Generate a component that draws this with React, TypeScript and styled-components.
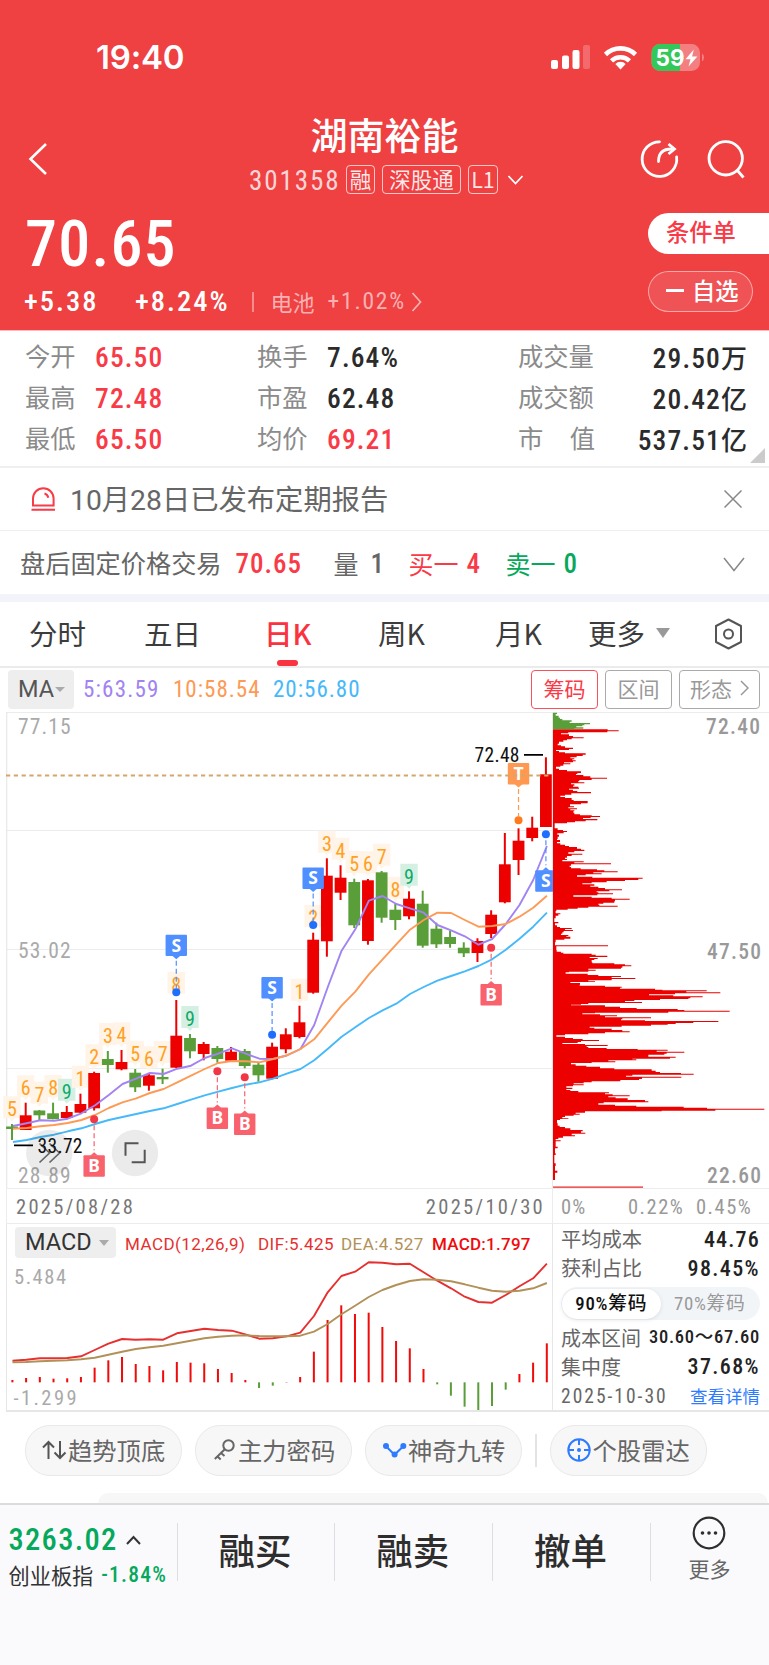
import React from 'react';
import styled, { createGlobalStyle } from 'styled-components';

const CJK = `"Noto Sans CJK SC", sans-serif`;
const DIGITS = `Roboto, "Noto Sans CJK SC", sans-serif`;

const Global = createGlobalStyle`
  * { box-sizing: border-box; }
  body { margin: 0; background: #fff; font-family: ${CJK}; }
  #root { width: 769px; }
`;

const Page = styled.div`
  width: 769px;
  height: 1665px;
  display: flex;
  flex-direction: column;
  overflow: hidden;
  background: #fff;
`;

const Txt = styled.span<{ $s: number; $c?: string; $w?: number; $ml?: number; $ls?: number; $width?: number; $up?: number }>`
  font-family: ${CJK};
  font-size: ${p => p.$s}px;
  font-weight: ${p => p.$w ?? 400};
  color: ${p => p.$c ?? 'inherit'};
  margin-left: ${p => p.$ml ?? 0}px;
  margin-bottom: ${p => (p.$up ?? 0) * 2}px;
  letter-spacing: ${p => p.$ls ?? 0}px;
  ${p => (p.$width ? `width: ${p.$width}px;` : '')}
  line-height: 1;
  white-space: nowrap;
  flex: none;
`;

const Num = styled(Txt)`
  font-family: ${DIGITS};
  font-stretch: 87.5%;
`;

/* ---------- header ---------- */

const Header = styled.header`
  height: 330px;
  flex: none;
  background: #ef4042;
  color: #fff;
  display: flex;
  flex-direction: column;
`;

const StatusBar = styled.div`
  height: 115px;
  display: flex;
  align-items: center;
  padding: 0 64px 0 96px;
`;

const Clock = styled.span`
  font: 600 33px/1 Inter, sans-serif;
  letter-spacing: -0.2px;
  flex: 1;
`;

const StatusIcons = styled.svg`
  width: 160px;
  height: 32px;
  margin-right: -1px;
`;

const Nav = styled.div`
  height: 88px;
  display: grid;
  grid-template-columns: 240px 289px 240px;
`;

const NavSide = styled.div`
  display: flex;
  align-items: center;
`;

const NavCenter = styled.div`
  display: flex;
  flex-direction: column;
  align-items: center;
  gap: 10px;
`;

const Title = styled.h1`
  margin: 0;
  height: 40px;
  font: 500 37px/38px ${CJK};
`;

const CodeRow = styled.div`
  height: 29px;
  display: flex;
  align-items: center;
  align-self: stretch;
  padding-left: 9px;
`;

const Badge = styled.span<{ $w: number; $ml: number }>`
  width: ${p => p.$w}px;
  height: 29px;
  margin-left: ${p => p.$ml}px;
  border: 1.5px solid rgba(255, 255, 255, 0.7);
  border-radius: 4px;
  color: rgba(255, 255, 255, 0.88);
  font: 400 21.5px/25px ${CJK};
  text-align: center;
  flex: none;
  white-space: nowrap;
`;

const PriceArea = styled.div`
  flex: 1;
  display: flex;
  justify-content: space-between;
`;

const PriceCol = styled.div`
  display: flex;
  flex-direction: column;
`;

const BigPrice = styled.div`
  height: 82px;
  display: flex;
  align-items: center;
  padding: 1px 0 0 25px;
`;

const ChangeRow = styled.div`
  height: 34px;
  display: flex;
  align-items: center;
  padding-left: 24px;
`;

const Bar = styled.i<{ $h: number; $c: string; $ml?: number }>`
  width: 1.5px;
  height: ${p => p.$h}px;
  background: ${p => p.$c};
  margin-left: ${p => p.$ml ?? 0}px;
  flex: none;
`;

const Actions = styled.div`
  width: 121px;
  padding-top: 10px;
  display: flex;
  flex-direction: column;
  gap: 17px;
`;

const OrderPill = styled.button`
  height: 41px;
  padding: 0 0 3px 18px;
  border: 0;
  border-radius: 21px 0 0 21px;
  background: #fff;
  color: #f93a47;
  font: 500 23.3px/1 ${CJK};
  text-align: left;
`;

const WatchPill = styled.button`
  height: 41px;
  width: 105px;
  padding: 0 0 2px 17px;
  border: 1.5px solid rgba(255, 255, 255, 0.5);
  border-radius: 21px;
  background: rgba(255, 255, 255, 0.1);
  color: #fff;
  font: 500 23.3px/1 ${CJK};
  display: flex;
  align-items: center;
  gap: 8px;
`;

const Minus = styled.i`
  width: 18px;
  height: 2.5px;
  background: #fff;
`;

/* ---------- quote stats ---------- */

const Stats = styled.section`
  height: 138px;
  flex: none;
  border-top: 1px solid #fbb9ba;
  border-bottom: 2px solid #efeff2;
  padding: 6px 22px 0 25px;
  display: grid;
  grid-template-columns: 232px 261px 229px;
  grid-auto-rows: 41px;
  position: relative;
`;

const Stat = styled.div`
  display: flex;
  align-items: center;
  color: #8b8b8b;
`;

const StatLabel = styled.span<{ $wide?: boolean; $spread?: boolean }>`
  width: ${p => (p.$wide ? 77 : 70)}px;
  font: 400 25.3px/1 ${CJK};
  margin-top: -3px;
  ${p => (p.$spread ? 'display: flex; justify-content: space-between;' : '')}
`;

const StatValue = styled(Num)<{ $right?: boolean }>`
  margin-top: 1px;
  ${p => (p.$right ? 'margin-left: auto;' : '')}
`;

const Unit = styled.span`
  font: 500 26px/1 ${CJK};
  letter-spacing: 0;
`;

const Corner = styled.i`
  position: absolute;
  right: 4px;
  bottom: 3px;
  border-left: 15px solid transparent;
  border-bottom: 15px solid #cbcbcb;
`;

const Notice = styled.section`
  height: 63px;
  flex: none;
  border-bottom: 1.5px solid #efeff2;
  display: flex;
  align-items: center;
  padding: 0 27px 0 31px;
  color: #666;
`;

const NoticeText = styled.span`
  margin: 4px 0 0 14px;
  font: 400 28.3px/1 ${DIGITS};
  color: #666;
`;

const AfterHours = styled.section`
  height: 63px;
  flex: none;
  display: flex;
  align-items: center;
  padding: 4px 24px 0 20px;
  color: #666;
`;

const Push = styled.i`
  flex: 1;
`;

const Gap = styled.div`
  height: 8px;
  flex: none;
  background: #f2f4f9;
`;

/* ---------- tabs ---------- */

const Tabs = styled.nav`
  height: 66px;
  flex: none;
  border-bottom: 2px solid #ebebeb;
  display: flex;
  align-items: center;
  padding-left: 29px;
  color: #3c3c3c;
`;

const Tab = styled.span<{ $w: number; $on?: boolean }>`
  width: ${p => p.$w}px;
  height: 64px;
  flex: none;
  display: flex;
  align-items: center;
  padding-bottom: 2px;
  font: 400 28.5px/1 ${CJK};
  color: ${p => (p.$on ? '#fa3340' : 'inherit')};
  font-weight: ${p => (p.$on ? 500 : 400)};
  position: relative;
  &::after {
    content: ${p => (p.$on ? '""' : 'none')};
    position: absolute;
    left: 13px;
    bottom: 0;
    width: 21px;
    height: 6px;
    border-radius: 3px;
    background: #fa3340;
  }
`;

const Caret = styled.i<{ $w: number; $h: number; $ml: number; $c?: string }>`
  border: solid transparent;
  border-width: ${p => p.$h}px ${p => p.$w / 2}px 0;
  border-top-color: ${p => p.$c ?? '#aaa'};
  margin-left: ${p => p.$ml}px;
  flex: none;
`;

const MaRow = styled.section`
  height: 44px;
  flex: none;
  display: flex;
  align-items: center;
  padding: 0 9px 1px 8px;
`;

const Selector = styled.div<{ $w: number; $h: number; $pl: number }>`
  width: ${p => p.$w}px;
  height: ${p => p.$h}px;
  padding-left: ${p => p.$pl}px;
  border-radius: 4px;
  background: #eee;
  color: #444;
  display: flex;
  align-items: center;
  flex: none;
`;

const SelectorText = styled.span<{ $c: string }>`
  font: 400 23.5px/1 Roboto, sans-serif;
  color: ${p => p.$c};
`;

const Toggle = styled.button<{ $w: number; $c: string; $b: string; $ml: number }>`
  width: ${p => p.$w}px;
  height: 39px;
  margin-left: ${p => p.$ml}px;
  padding: 0 0 3px;
  border: 1.5px solid ${p => p.$b};
  border-radius: 4px;
  background: #fff;
  color: ${p => p.$c};
  font: 400 21px/1 ${CJK};
  display: flex;
  align-items: center;
  justify-content: center;
  gap: 8px;
`;

/* ---------- charts ---------- */

const ChartGrid = styled.section`
  display: grid;
  grid-template-columns: 553px 216px;
  grid-template-rows: 476px 36px 188px;
  flex: none;
`;

const Svg = styled.svg`
  display: block;
  width: 100%;
  height: 100%;
`;

const AxisLabel = styled.text`
  font-family: Roboto, sans-serif;
  font-stretch: 87.5%;
`;

const Dates = styled.div`
  margin-left: 6px;
  border: solid #ececec;
  border-width: 1px 1px 1px 1.5px;
  padding: 2px 7px 0 9px;
  display: flex;
  justify-content: space-between;
  align-items: center;
  color: #777;
`;

const Percents = styled.div`
  border: solid #ececec;
  border-width: 1px 0;
  display: flex;
  align-items: center;
  padding: 2px 0 0 8px;
  color: #999;
`;

const MacdPane = styled.div`
  margin-left: 6px;
  border: solid #e6e6e6;
  border-width: 0 1px 2px 1.5px;
  display: flex;
  flex-direction: column;
`;

const MacdHead = styled.div`
  height: 36px;
  flex: none;
  display: flex;
  align-items: center;
  padding: 1px 0 0 8px;
`;

const MacdLabel = styled.span<{ $c: string; $w?: number; $bold?: boolean }>`
  width: ${p => (p.$w ? `${p.$w}px` : 'auto')};
  padding-top: 4px;
  font: ${p => (p.$bold ? 500 : 400)} 17px/1 Roboto, sans-serif;
  letter-spacing: ${p => (p.$bold ? 0.25 : 0.45)}px;
  color: ${p => p.$c};
  white-space: nowrap;
  flex: none;
`;

const MacdBody = styled.div`
  flex: 1;
  min-height: 0;
`;

const CostPane = styled.div`
  border-bottom: 2px solid #e6e6e6;
  padding: 0 9px 0 8px;
  display: flex;
  flex-direction: column;
`;

const CostRow = styled.div<{ $h: number }>`
  height: ${p => p.$h}px;
  flex: none;
  display: flex;
  align-items: center;
  justify-content: space-between;
  color: #666;
`;

const Segment = styled.div`
  height: 33px;
  margin: 4px 0 3px 0;
  border-radius: 17px;
  background: #f2f5f8;
  display: flex;
  align-items: center;
  padding: 1px;
  flex: none;
`;

const SegItem = styled.span<{ $on?: boolean }>`
  flex: 1;
  height: 30px;
  border-radius: 15px;
  background: ${p => (p.$on ? '#fff' : 'transparent')};
  box-shadow: ${p => (p.$on ? '0 1px 4px rgba(0,0,0,.1)' : 'none')};
  color: ${p => (p.$on ? '#111' : '#999')};
  font: ${p => (p.$on ? 500 : 400)} 18.8px/31px ${DIGITS};
  font-stretch: 87.5%;
  letter-spacing: 0.7px;
  text-align: center;
`;

/* ---------- bottom ---------- */

const Chips = styled.section`
  height: 81px;
  flex: none;
  display: flex;
  align-items: flex-start;
  padding: 13px 0 0 25px;
  gap: 13px;
`;

const Chip = styled.button`
  width: 157px;
  height: 51px;
  border: 1.5px solid #e9e9e9;
  border-radius: 25px;
  background: #f7f7f7;
  color: #666;
  font: 400 24.3px/1 ${CJK};
  padding: 0 0 1px 16px;
  display: flex;
  align-items: center;
  gap: 1px;
  flex: none;
`;

const ChipRule = styled.i`
  width: 1.5px;
  height: 33px;
  margin-top: 9px;
  background: #e4e4e4;
  margin-right: 0;
`;

const Peek = styled.div`
  height: 10px;
  flex: none;
  margin: 0 1px 0 98px;
  border-radius: 10px 10px 0 0;
  background: #f7f7f7;
`;

const BottomBar = styled.footer`
  flex: 1;
  border-top: 2px solid #dcdcdf;
  background: #fafafc;
  display: flex;
  align-items: flex-start;
`;

const IndexCol = styled.div`
  width: 176.5px;
  padding: 16px 0 0 8.5px;
  display: flex;
  flex-direction: column;
`;

const IndexLine = styled.div<{ $h: number }>`
  height: ${p => p.$h}px;
  display: flex;
  align-items: center;
`;

const Trade = styled.button`
  width: 157.8px;
  height: 58px;
  margin-top: 18px;
  padding: 0 2px 4px 0;
  border: 0;
  border-left: 1.5px solid #dedee2;
  background: none;
  color: #2e2e2e;
  font: 500 36.5px/1 ${CJK};
`;

const MoreCol = styled.div`
  flex: 1;
  height: 58px;
  margin-top: 18px;
  border-left: 1.5px solid #dedee2;
  padding-right: 1px;
  display: flex;
  flex-direction: column;
  align-items: center;
  color: #666;
`;

const MoreIcon = styled.svg`
  width: 34px;
  height: 34px;
  margin-top: -7px;
  margin-bottom: 8px;
  flex: none;
`;

/* ---------- data ---------- */

const RED = '#ec0000';
const GREEN = '#5a9e3a';
const cx = (i: number) => 12 + 13.69 * i;

// [up, high, bodyTop, bodyBottom, low]
const candles: [number, number, number, number, number][] = [
  [0, 1124, 1126.5, 1129, 1140], [1, 1102.7, 1115.3, 1130, 1130], [0, 1110, 1110.5, 1115.3, 1120.5],
  [0, 1102.7, 1113.3, 1119, 1119.3], [1, 1106, 1112, 1118, 1118], [1, 1093.7, 1104, 1112.7, 1113],
  [1, 1071.7, 1073, 1108.3, 1110.5], [0, 1051, 1059, 1065, 1072.7], [1, 1050, 1062, 1069.3, 1070.3],
  [0, 1069, 1072.7, 1087.3, 1092], [1, 1073.3, 1075.3, 1085.7, 1090.7], [0, 1068.7, 1077, 1079.3, 1084],
  [1, 1000, 1035.7, 1067.7, 1068], [0, 1034, 1038, 1051.3, 1058.3], [1, 1042, 1044, 1054, 1060.3],
  [0, 1046, 1048, 1059, 1062.7], [1, 1047, 1051.7, 1060.7, 1060.7], [0, 1049, 1051, 1066, 1068.3],
  [0, 1062.7, 1064.7, 1075.3, 1081.7], [1, 1042.7, 1046.7, 1078.7, 1079.3], [1, 1028.3, 1034.3, 1049.3, 1053.3],
  [1, 1005.7, 1022.3, 1037, 1038.3], [1, 932.7, 939.7, 992.7, 993.7], [1, 858.3, 875.7, 941.3, 956.7],
  [1, 865.3, 877.7, 892.7, 900], [0, 878.7, 882, 925.3, 928], [1, 879, 880.3, 941, 944.7],
  [0, 871, 872.3, 917.7, 922.7], [0, 904, 909.7, 920, 930], [1, 891.3, 898.7, 916.3, 919.3],
  [0, 890.7, 903.7, 945.7, 947.7], [0, 922.7, 928.7, 944.3, 948], [0, 930.7, 937, 944, 947.7],
  [0, 942.3, 947.7, 953.3, 957], [1, 938.3, 941, 953, 962], [1, 910.3, 914.7, 934, 938],
  [1, 833, 864.3, 902.3, 903.3], [1, 828.3, 840.7, 860, 875], [1, 816.7, 827.7, 838, 841.3],
  [1, 757.3, 774.3, 827, 827],
];

const ma5 = [1126, 1123.3, 1120.3, 1120.7, 1118.7, 1113.3, 1105.3, 1095, 1084, 1078.7, 1073, 1074, 1068.7, 1065.7, 1058, 1053.7, 1048.3, 1053.7, 1058.7, 1059, 1055.5, 1049, 1025, 986.7, 950.7, 929.3, 900.7, 896, 904, 908.3, 912.7, 925, 930.3, 936.3, 944.7, 939, 924, 905, 880, 846];
const ma10 = [1128.7, 1128, 1126.3, 1125, 1123, 1120, 1115, 1108, 1102.3, 1098.3, 1093, 1089, 1082.3, 1075.7, 1069, 1063, 1061, 1061.3, 1062.3, 1059, 1055.3, 1049, 1039.3, 1022.3, 1005.7, 991.7, 974.3, 959.3, 944.3, 929.7, 920, 912.7, 913, 920, 926.7, 926, 924, 916.7, 907.7, 895.7];
const ma20 = [1142, 1140, 1137, 1134.7, 1131.3, 1128.3, 1124, 1120, 1117, 1114, 1111, 1108.3, 1104, 1099.7, 1095.3, 1091.7, 1088, 1084.7, 1082.3, 1078.7, 1073.7, 1069, 1060.3, 1048.7, 1036.7, 1027.3, 1018, 1010.3, 1003.7, 994, 987, 980.7, 976, 971.3, 966, 959.3, 949.7, 938.7, 926.7, 912.7];

// [candle index, digit, text centre]
const counts: [number, string, number][] = [
  [0, '5', 1109.3], [1, '6', 1088.3], [2, '7', 1094.7], [3, '8', 1088], [4, '9', 1091.7], [5, '1', 1078.7],
  [6, '2', 1057.3], [7, '3', 1036], [8, '4', 1035.3], [9, '5', 1053.7], [10, '6', 1059.3], [11, '7', 1054],
  [12, '8', 984.7], [13, '9', 1019], [21, '1', 991.7], [22, '2', 918], [23, '3', 843.7], [24, '4', 850.7],
  [25, '5', 864], [26, '6', 864.3], [27, '7', 856.7], [28, '8', 889.7], [29, '9', 876.7],
];

type Mark = { i: number; t: 'S' | 'B' | 'T'; box: number; dot: number };
const marks: Mark[] = [
  { i: 12, t: 'S', box: 934.7, dot: 992.3 },
  { i: 19, t: 'S', box: 977, dot: 1034.7 },
  { i: 22, t: 'S', box: 867.5, dot: 925 },
  { i: 39, t: 'S', box: 870.3, dot: 834.3 },
  { i: 37, t: 'T', box: 763, dot: 820.3 },
  { i: 6, t: 'B', box: 1155.3, dot: 1119.3 },
  { i: 15, t: 'B', box: 1107.5, dot: 1071.3 },
  { i: 17, t: 'B', box: 1113.5, dot: 1077.3 },
  { i: 35, t: 'B', box: 984, dot: 947.7 },
];
const markColors = {
  S: ['#4f8fff', '#1f6fff'],
  B: ['#f9616d', '#f33644'],
  T: ['#ff9850', '#ff7a1c'],
};

// Cost distribution as alternating row offset and extent, three units per pixel.
const lossRows = [38, 36, 42, 32, 47, 41, 53, 45, 57, 52, 61, 80, 65, 74, 69, 135, 73, 118, 76, 112, 79, 94, 82, 115, 86, 88];
const profitRows = [
  88, 188, 91, 221, 94, 187, 97, 70, 100, 48, 103, 72, 108, 84, 112, 116, 115, 80, 118, 66, 121, 55, 125, 42, 131, 38, 136, 48, 139, 60, 143, 84, 147, 72, 150, 33,
  153, 42, 157, 60, 160, 122, 164, 113, 168, 95, 172, 76, 175, 88, 178, 82, 181, 92, 184, 84, 187, 57, 190, 76, 193, 55, 197, 46, 200, 33, 206, 42, 210, 66,
  214, 108, 219, 97, 222, 93, 225, 115, 229, 136, 233, 186, 236, 140, 240, 103, 243, 100, 247, 118, 250, 78, 253, 88, 257, 84, 260, 100, 263, 102, 266, 72,
  269, 84, 273, 97, 276, 138, 280, 79, 284, 60, 287, 46, 291, 60, 294, 80, 300, 86, 303, 128, 310, 108, 313, 75, 319, 87, 322, 70, 325, 96, 328, 76, 331, 88,
  334, 85, 338, 88, 343, 105, 346, 140, 348, 165, 351, 137, 354, 114, 357, 157, 361, 122, 364, 90, 367, 66, 370, 29, 385, 38, 390, 54, 393, 66, 396, 56, 400, 37,
  404, 42, 410, 38, 417, 36, 420, 45, 426, 36, 430, 46, 434, 60, 438, 72, 441, 96, 446, 108, 449, 118, 453, 88, 457, 70, 461, 112, 464, 80, 468, 66, 473, 60,
  477, 66, 480, 52, 484, 116, 487, 88, 490, 198, 493, 78, 497, 74, 501, 78, 505, 107, 508, 156, 511, 178, 514, 218, 517, 145, 520, 170, 523, 122, 526, 96,
  530, 142, 533, 293, 536, 280, 540, 240, 543, 185, 547, 140, 550, 112, 553, 148, 557, 136, 560, 160, 564, 180, 568, 231, 571, 193, 574, 155, 577, 160, 580, 204,
  583, 157, 586, 85, 590, 140, 593, 200, 596, 254, 599, 210, 604, 208, 608, 175, 611, 160, 614, 163, 617, 218, 620, 130, 623, 98, 626, 68, 629, 34, 633, 32,
  640, 46, 643, 40, 647, 32, 655, 28, 666, 40, 670, 30, 676, 36, 681, 45, 684, 80, 687, 60, 690, 84, 693, 56, 697, 52, 701, 48, 705, 70, 708, 64, 710, 76,
  716, 58, 719, 32, 727, 30, 736, 189, 739, 34, 745, 34, 750, 35, 755, 48, 758, 55, 761, 140, 764, 152, 767, 187, 771, 134, 774, 158, 777, 148, 780, 140,
  787, 142, 790, 208, 793, 240, 796, 259, 799, 232, 803, 228, 806, 130, 809, 152, 812, 130, 815, 72, 817, 62, 821, 128, 825, 160, 828, 228, 831, 200, 834, 271,
  837, 200, 841, 130, 844, 150, 846, 76, 849, 105, 854, 104, 857, 180, 860, 230, 863, 225, 866, 330, 869, 352, 871, 485, 874, 424, 877, 526, 880, 390, 883, 312,
  886, 385, 889, 473, 892, 436, 895, 430, 897, 345, 900, 268, 903, 240, 906, 291, 909, 130, 912, 108, 914, 78, 916, 180, 920, 225, 924, 275, 927, 398, 930, 418,
  932, 554, 935, 370, 938, 150, 940, 112, 943, 165, 946, 216, 949, 180, 952, 318, 955, 232, 958, 228, 961, 300, 963, 520, 966, 445, 969, 392, 972, 368, 974, 318,
  977, 230, 980, 134, 983, 148, 986, 200, 990, 232, 994, 254, 997, 180, 1000, 130, 1003, 60, 1006, 34, 1010, 60, 1014, 84, 1017, 113, 1020, 162, 1023, 108,
  1026, 98, 1029, 52, 1032, 120, 1035, 188, 1038, 125, 1041, 130, 1044, 185, 1047, 278, 1049, 368, 1052, 335, 1055, 418, 1058, 365, 1061, 358, 1064, 310,
  1070, 392, 1073, 375, 1076, 262, 1078, 274, 1081, 190, 1084, 211, 1087, 140, 1089, 78, 1093, 92, 1097, 124, 1100, 165, 1105, 208, 1108, 320, 1112, 332,
  1116, 345, 1119, 408, 1121, 446, 1124, 262, 1127, 243, 1130, 409, 1133, 291, 1137, 282, 1140, 226, 1144, 140, 1147, 116, 1150, 86, 1153, 116, 1156, 84,
  1159, 64, 1163, 82, 1167, 64, 1170, 76, 1173, 100, 1177, 192, 1180, 180, 1183, 203, 1186, 254, 1189, 190, 1192, 212, 1195, 248, 1200, 300, 1204, 310,
  1207, 176, 1210, 160, 1214, 210, 1217, 274, 1220, 416, 1223, 486, 1226, 658, 1229, 511, 1232, 350, 1234, 120, 1238, 92, 1241, 104, 1244, 86, 1247, 60,
  1251, 52, 1255, 70, 1257, 45, 1260, 36, 1270, 38, 1277, 44, 1281, 60, 1285, 76, 1290, 113, 1294, 108, 1298, 121, 1301, 80, 1306, 90, 1309, 54, 1313, 40,
  1317, 32, 1321, 47, 1324, 32, 1340, 38, 1345, 30, 1360, 32, 1365, 28, 1390, 32, 1398, 30, 1412, 37, 1418, 30, 1440, 24,
];
const steps = (rows: number[], end: number) => {
  let d = `M24 ${rows[0]}`;
  for (let k = 0; k < rows.length; k += 2) d += `V${rows[k]}H${rows[k + 1]}`;
  return `${d}V${end}H24Z`;
};

const dif = [422, 419, 415, 415, 414, 409, 390, 371, 357, 359, 358, 359, 340, 333, 326, 330, 332, 343, 356, 355, 349, 338, 288, 217, 168, 155, 127, 128, 133, 131, 157, 182, 205, 230, 246, 248, 225, 199, 175, 131];
const dea = [427, 426, 424, 422, 421, 418, 413, 404, 395, 387, 382, 377, 370, 362, 355, 350, 347, 346, 348, 349, 349, 347, 335, 312, 283, 257, 231, 210, 195, 183, 178, 179, 184, 193, 203, 212, 215, 212, 205, 189];
const hist = [480, 474, 471, 476, 475, 471, 443, 421, 411, 432, 438, 451, 426, 428, 430, 447, 459, 480, 504, 497, 486, 471, 395, 300, 256, 282, 278, 321, 363, 385, 447, 493, 527, 560, 572, 558, 509, 462, 428, 370];
const ZERO = 487;

const line = (ys: number[], f: (y: number) => number = y => y, dx = 1) =>
  ys.map((y, i) => `${(cx(i) + dx).toFixed(1)},${f(y).toFixed(1)}`).join(' ');

const AxisText = ({ x, y, w, s = 21.5, c = '#aaa', weight = 400, children }: { x: number; y: number; w: number; s?: number; c?: string; weight?: number; children: string }) => (
  <AxisLabel x={x} y={y} textLength={w} lengthAdjust="spacing" fontSize={s} fontWeight={weight} fill={c}>
    {children}
  </AxisLabel>
);

const Marker = ({ i, t, box, dot }: Mark) => {
  const x = cx(i);
  const above = box < dot;
  const [fill, dark] = markColors[t];
  const y1 = above ? box + 26 : dot + 6;
  const y2 = above ? dot - 4 : box - 5;
  return (
    <g>
      <line x1={x} x2={x} y1={y1} y2={y2} stroke={fill} strokeWidth="1.2" strokeDasharray="5 3" />
      <circle cx={x} cy={dot} r="4" fill={dark} />
      <rect x={x - 10.7} y={box} width="21.4" height="21.4" rx="1" fill={fill} />
      <path d={above ? `M${x - 4} ${box + 21}l4 3.6l4-3.6z` : `M${x - 4} ${box + 0.4}l4-3.4l4 3.4z`} fill={fill} />
      <text x={x} y={box + 16.8} textAnchor="middle" fontFamily='"Noto Sans", sans-serif' fontSize="17.5" fontWeight="700" fill="#fff">{t}</text>
    </g>
  );
};

const CandleChart = () => (
  <Svg viewBox="0 712 553 476">
    {[712.5, 830.5, 949.5, 1068.5].map(y => (
      <line key={y} x1="6" x2="553" y1={y} y2={y} stroke="#ececec" />
    ))}
    <path d="M6.7 712V1188M552.6 712V1188" stroke="#e8e8e8" strokeWidth="1.2" />
    <AxisText x={18} y={733.7} w={52.5}>77.15</AxisText>
    <AxisText x={18} y={958} w={52.5}>53.02</AxisText>
    <AxisText x={18} y={1182.7} w={52.5}>28.89</AxisText>
    {counts.map(([i, t, y]) => {
      const done = t === '9';
      const x = cx(i);
      return (
        <g key={i}>
          <path d={`M${x - 8.7} ${y - 13}h17.4v22h-6l-2.7 3l-2.7-3h-6z`} fill={done ? '#d5f0e3' : '#fff4e7'} />
          <AxisLabel x={x} y={y + 7} textAnchor="middle" fontSize="20" fill={done ? '#0fa968' : '#ffa01e'}>{t}</AxisLabel>
        </g>
      );
    })}
    {candles.map(([up, h, a, b, l], i) => (
      <g key={i} fill={up ? RED : GREEN}>
        <rect x={cx(i) - 1} y={h} width="2" height={l - h} />
        <rect x={cx(i) - 5.9} y={a} width="11.8" height={b - a} />
      </g>
    ))}
    <g fill="none" strokeWidth="1.9" strokeLinejoin="round">
      <polyline points={line(ma20)} stroke="#45b9f9" />
      <polyline points={line(ma5)} stroke="#a183f2" />
      <polyline points={line(ma10)} stroke="#fd9a55" />
    </g>
    {marks.map(m => <Marker key={m.i} {...m} />)}
    <line x1="6" x2="550" y1="775.5" y2="775.5" stroke="#d3a76c" strokeWidth="1.8" strokeDasharray="4.2 3.6" />
    <path d="M524 754.8h19M14 1145.4h19" stroke="#000" strokeWidth="1.7" />
    <AxisText x={474.5} y={762} w={45} s={19.5} c="#111">72.48</AxisText>
    <circle cx="49.3" cy="1153" r="23.2" fill="#000" fillOpacity=".08" />
    <circle cx="135" cy="1153" r="23.2" fill="#000" fillOpacity=".08" />
    <path d="M39.5 1143.5l10 9.5-10 9.5M49.5 1143.5l10 9.5-10 9.5" fill="none" stroke="#666" strokeWidth="1.7" />
    <path d="M138.5 1143.3h-13v12.5M144.7 1149.8v12.5h-13" fill="none" stroke="#555" strokeWidth="2" />
    <AxisText x={37.5} y={1152.7} w={45} s={19.5} c="#111">33.72</AxisText>
  </Svg>
);

const CostChart = () => (
  <Svg viewBox="553 712 216 476">
    <line x1="553" x2="769" y1="712.5" y2="712.5" stroke="#ececec" />
    <g transform="translate(545 700) scale(.33333)">
      <path d={steps(profitRows, 1440)} fill={RED} />
      <path d={steps(lossRows, 88)} fill={GREEN} />
    </g>
    <rect x="553" y="1186.4" width="90" height="1.5" fill="#ee4a4a" />
    <AxisText x={706} y={733.7} w={54} c="#999" weight={500}>72.40</AxisText>
    <AxisText x={707} y={958.5} w={54} c="#999" weight={500}>47.50</AxisText>
    <AxisText x={707} y={1183.2} w={54} c="#999" weight={500}>22.60</AxisText>
  </Svg>
);

const my = (v: number) => 1220 + v / 3;

const MacdChart = () => (
  <Svg viewBox="7.5 1260 544.5 150" preserveAspectRatio="none">
    {hist.map((v, i) => (
      <rect key={i} x={cx(i) - 0.1} y={my(Math.min(v, ZERO))} width="2" height={Math.abs(v - ZERO) / 3} fill={v < ZERO ? '#f00a0a' : '#5a9e3a'} />
    ))}
    <g fill="none" strokeWidth="1.9" strokeLinejoin="round">
      <polyline points={line(dif, my)} stroke="#e6302f" />
      <polyline points={line(dea, my)} stroke="#b29159" />
    </g>
    <AxisText x={14.5} y={1284.5} w={52} s={20.5}>5.484</AxisText>
    <AxisText x={14} y={1405} w={63} s={20.5}>-1.299</AxisText>
  </Svg>
);

const quote: { label: string; value: string; unit?: string; red?: boolean }[] = [
  { label: '今开', value: '65.50', red: true }, { label: '换手', value: '7.64%' }, { label: '成交量', value: '29.50', unit: '万' },
  { label: '最高', value: '72.48', red: true }, { label: '市盈', value: '62.48' }, { label: '成交额', value: '20.42', unit: '亿' },
  { label: '最低', value: '65.50', red: true }, { label: '均价', value: '69.21', red: true }, { label: '市值', value: '537.51', unit: '亿' },
];

export default function App() {
  return (
    <>
      <Global />
      <Page>
        <Header>
          <StatusBar>
            <Clock>19:40</Clock>
            <StatusIcons viewBox="546 42 160 32">
              <g fill="#fff">
                <rect x="551" y="60" width="7" height="9" rx="2" />
                <rect x="562" y="55.5" width="7" height="13.5" rx="2" />
                <rect x="572.5" y="50" width="7" height="19" rx="2" />
                <rect x="583" y="45" width="7" height="24" rx="2" opacity=".22" />
              </g>
              <g fill="none" stroke="#fff" strokeWidth="4.6">
                <path d="M605.5 54.5a21.5 21.5 0 0 1 30 0" />
                <path d="M611.5 60.8a13 13 0 0 1 18 0" />
              </g>
              <path d="M620.5 69.5l-5.2-5.6a7.6 7.6 0 0 1 10.4 0z" fill="#fff" />
              <rect x="651.5" y="44" width="48.5" height="27" rx="8.5" fill="#fff" fillOpacity=".33" />
              <path d="M680 44h-20a8.5 8.5 0 0 0-8.5 8.5v10a8.5 8.5 0 0 0 8.5 8.5h20z" fill="#34c759" />
              <path d="M702 53.5a5 5 0 0 1 0 8z" fill="#fff" fillOpacity=".35" />
              <text x="655.5" y="65.6" textLength="29" lengthAdjust="spacingAndGlyphs" fontFamily="Inter, sans-serif" fontWeight="700" fontSize="22.5" fill="#fff">59</text>
              <path d="M693.8 49.5l-8.3 9.7h5l-2 7.2 8.9-9.9h-5.3z" fill="#fff" />
            </StatusIcons>
          </StatusBar>
          <Nav>
            <NavSide>
              <svg width="60" height="40" viewBox="0 0 60 40" fill="none" stroke="#fff" strokeWidth="2.6">
                <path d="M46 5L30.5 20L46 35" />
              </svg>
            </NavSide>
            <NavCenter>
              <Title>湖南裕能</Title>
              <CodeRow>
                <Num $s={27} $c="rgba(255,255,255,.8)" $ls={1.9} $width={91} $up={-2}>301358</Num>
                <Badge $w={29} $ml={6}>融</Badge>
                <Badge $w={79} $ml={7}>深股通</Badge>
                <Badge $w={30} $ml={7}>L1</Badge>
                <svg width="18" height="12" viewBox="0 0 18 12" fill="none" stroke="#fff" strokeWidth="1.8" style={{ marginLeft: 9 }}>
                  <path d="M1.5 2L8.5 9.5L15.5 2" />
                </svg>
              </CodeRow>
            </NavCenter>
            <NavSide>
              <svg width="240" height="44" viewBox="529 137 240 44" fill="none" stroke="#fff" strokeWidth="2.8">
                <path d="M659.5 141.8A17.3 17.3 0 1 0 676.6 157" strokeLinecap="round" />
                <path d="M658.5 161.5c0-9 5-12.5 13-12.5" strokeLinecap="round" />
                <path d="M668.5 144l6 5-6 5" />
                <circle cx="725.7" cy="158.3" r="16.7" />
                <path d="M737 170l6.5 7.5" />
              </svg>
            </NavSide>
          </Nav>
          <PriceArea>
            <PriceCol>
              <BigPrice><Num $s={64} $w={500} $ls={1.2}>70.65</Num></BigPrice>
              <ChangeRow>
                <Num $s={28.5} $w={500} $width={111} $ls={2} $up={-0.5}>+5.38</Num>
                <Num $s={28.5} $w={500} $width={117} $ls={2} $up={-0.5}>+8.24%</Num>
                <Bar $h={20} $c="rgba(255,255,255,.4)" />
                <Txt $s={22} $c="rgba(255,255,255,.6)" $ml={17} $up={1.5}>电池</Txt>
                <Num $s={23.5} $c="rgba(255,255,255,.6)" $ml={13} $ls={1.8} $width={76}>+1.02%</Num>
                <svg width="12" height="22" viewBox="0 0 12 22" fill="none" stroke="#fff" strokeOpacity=".6" strokeWidth="1.7" style={{ marginLeft: 7 }}>
                  <path d="M1.5 2L9.5 11L1.5 20" />
                </svg>
              </ChangeRow>
            </PriceCol>
            <Actions>
              <OrderPill>条件单</OrderPill>
              <WatchPill><Minus />自选</WatchPill>
            </Actions>
          </PriceArea>
        </Header>

        <Stats>
          {quote.map(q => (
            <Stat key={q.label}>
              <StatLabel $wide={!!q.unit} $spread={q.label === '市值'}>
                {q.label === '市值' ? <><span>市</span><span>值</span></> : q.label}
              </StatLabel>
              <StatValue $s={27.5} $w={500} $ls={1.15} $c={q.red ? '#f93a47' : '#2b2b2b'} $right={!!q.unit}>
                {q.value}{q.unit && <Unit>{q.unit}</Unit>}
              </StatValue>
            </Stat>
          ))}
          <Corner />
        </Stats>

        <Notice>
          <svg width="25" height="26" viewBox="0 0 25 26" fill="none" stroke="#f93a47" strokeWidth="2">
            <path d="M2 19.5V12.5a10.3 10.3 0 0 1 20.6 0V19.5ZM.5 23.8H24M13.5 7.5a5.5 5.5 0 0 1 3.8 4.2" />
          </svg>
          <NoticeText>10月28日已发布定期报告</NoticeText>
          <Push />
          <svg width="18" height="18" viewBox="0 0 18 18" stroke="#888" strokeWidth="1.5"><path d="M.5.5l17 17M17.5.5l-17 17" /></svg>
        </Notice>
        <AfterHours>
          <Txt $s={25.2} $up={1.5}>盘后固定价格交易</Txt>
          <Num $s={27} $w={500} $c="#f93a47" $ml={14} $ls={1} $width={66}>70.65</Num>
          <Txt $s={25} $ml={32} $up={1.5}>量</Txt>
          <Num $s={27} $w={500} $ml={12} $width={15}>1</Num>
          <Txt $s={25} $c="#f93a47" $ml={23} $up={1.5}>买一</Txt>
          <Num $s={27} $w={500} $c="#f93a47" $ml={8} $width={15}>4</Num>
          <Txt $s={25} $c="#06a95c" $ml={24} $up={1.5}>卖一</Txt>
          <Num $s={27} $w={500} $c="#06a95c" $ml={8}>0</Num>
          <Push />
          <svg width="22" height="16" viewBox="0 0 22 16" fill="none" stroke="#888" strokeWidth="1.5"><path d="M1 1L11 13.5L21 1" /></svg>
        </AfterHours>
        <Gap />

        <Tabs>
          <Tab $w={115}>分时</Tab>
          <Tab $w={120}>五日</Tab>
          <Tab $w={114} $on>日K</Tab>
          <Tab $w={117}>周K</Tab>
          <Tab $w={93}>月K</Tab>
          <Tab $w={126}>更多<Caret $w={14} $h={10} $ml={11} $c="#999" /></Tab>
          <svg width="29" height="32" viewBox="0 0 29 32" fill="none" stroke="#555" strokeWidth="2">
            <path d="M14.5 1.5L27 8V24L14.5 30.5L2 24V8Z" strokeLinejoin="round" />
            <circle cx="14.5" cy="16" r="4.5" />
          </svg>
        </Tabs>

        <MaRow>
          <Selector $w={66} $h={39} $pl={10}>
            <SelectorText $c="#555">MA</SelectorText>
            <Caret $w={10} $h={5} $ml={1} />
          </Selector>
          <Num $s={23} $c="#a183f2" $ml={9} $ls={1.2} $width={90}>5:63.59</Num>
          <Num $s={23} $c="#fd9a55" $ls={1} $width={100}>10:58.54</Num>
          <Num $s={23} $c="#45b9f9" $ls={1}>20:56.80</Num>
          <Push />
          <Toggle $w={67} $ml={0} $c="#f93a47" $b="#f9515c">筹码</Toggle>
          <Toggle $w={67} $ml={7} $c="#999" $b="#aaa">区间</Toggle>
          <Toggle $w={81} $ml={7} $c="#999" $b="#aaa">
            形态
            <svg width="9" height="16" viewBox="0 0 9 16" fill="none" stroke="#999" strokeWidth="1.5"><path d="M1 1L8 8L1 15" /></svg>
          </Toggle>
        </MaRow>

        <ChartGrid>
          <CandleChart />
          <CostChart />
          <Dates>
            <Num $s={20.5} $ls={2.3}>2025/08/28</Num>
            <Num $s={20.5} $ls={2.3}>2025/10/30</Num>
          </Dates>
          <Percents>
            <Num $s={20.5} $width={67} $ls={1.2}>0%</Num>
            <Num $s={20.5} $width={68} $ls={1.5}>0.22%</Num>
            <Num $s={20.5} $ls={1.5}>0.45%</Num>
          </Percents>
          <MacdPane>
            <MacdHead>
              <Selector $w={101} $h={31} $pl={10}>
                <SelectorText $c="#333">MACD</SelectorText>
                <Caret $w={10} $h={6} $ml={7} />
              </Selector>
              <MacdLabel $c="#e6302f" $w={142}><span style={{ marginLeft: 9 }}>MACD(12,26,9)</span></MacdLabel>
              <MacdLabel $c="#e6302f" $w={83}>DIF:5.425</MacdLabel>
              <MacdLabel $c="#b29159" $w={91}>DEA:4.527</MacdLabel>
              <MacdLabel $c="#f00a0a" $bold>MACD:1.797</MacdLabel>
            </MacdHead>
            <MacdBody><MacdChart /></MacdBody>
          </MacdPane>
          <CostPane>
            <CostRow $h={31}><Txt $s={20.3} $up={1.5}>平均成本</Txt><Num $s={22} $w={500} $c="#222" $ls={1.2}>44.76</Num></CostRow>
            <CostRow $h={28}><Txt $s={20.3} $up={1.5}>获利占比</Txt><Num $s={22} $w={500} $c="#222" $ls={1.4}>98.45%</Num></CostRow>
            <Segment>
              <SegItem $on>90%筹码</SegItem>
              <SegItem>70%筹码</SegItem>
            </Segment>
            <CostRow $h={29}><Txt $s={20}>成本区间</Txt><Num $s={18.5} $w={500} $c="#222" $ls={0.75}>30.60～67.60</Num></CostRow>
            <CostRow $h={30}><Txt $s={20}>集中度</Txt><Num $s={22} $w={500} $c="#222" $ls={1.4}>37.68%</Num></CostRow>
            <CostRow $h={29}><Num $s={19.5} $ls={2}>2025-10-30</Num><Txt $s={17.5} $c="#2f7bff" $up={0.5}>查看详情</Txt></CostRow>
          </CostPane>
        </ChartGrid>

        <Chips>
          <Chip>
            <svg width="25" height="24" viewBox="0 0 25 24" fill="none" stroke="#555" strokeWidth="2">
              <path d="M6.5 21V4M1 9.5L6.5 4L12 9.5M18 3V20M12.5 14.5L18 20L23.5 14.5" />
            </svg>
            趋势顶底
          </Chip>
          <Chip>
            <svg width="25" height="24" viewBox="0 0 25 24" fill="none" stroke="#666" strokeWidth="2">
              <circle cx="16.5" cy="7.5" r="5.2" />
              <path d="M12.8 11.3L2.8 21M5.5 18.5l3.2 3M9 15l3.5 3" />
            </svg>
            主力密码
          </Chip>
          <Chip>
            <svg width="25" height="24" viewBox="0 0 25 24" fill="none" stroke="#2f7bff" strokeWidth="2">
              <path d="M4 8.3L12.5 16.8L21.3 8.3" />
              <g fill="#2f7bff" stroke="none"><circle cx="4" cy="8" r="3" /><circle cx="12.6" cy="16.6" r="3" /><circle cx="21.3" cy="8" r="3" /></g>
            </svg>
            神奇九转
          </Chip>
          <ChipRule />
          <Chip>
            <svg width="25" height="24" viewBox="0 0 25 24" fill="none" stroke="#2f7bff" strokeWidth="2">
              <circle cx="12" cy="12" r="10.7" />
              <path d="M12 1v6M12 17v6M1 12h6M17 12h6" />
              <circle cx="12" cy="12" r="2" fill="#2f7bff" stroke="none" />
            </svg>
            个股雷达
          </Chip>
        </Chips>
        <Peek />

        <BottomBar>
          <IndexCol>
            <IndexLine $h={38}>
              <Num $s={30.5} $w={500} $c="#06a95c" $ls={1.3} $width={110}>3263.02</Num>
              <svg width="15" height="10" viewBox="0 0 15 10" fill="none" stroke="#333" strokeWidth="2" style={{ marginLeft: 7 }}><path d="M1 9L7.5 2L14 9" /></svg>
            </IndexLine>
            <IndexLine $h={32}>
              <Txt $s={21.2} $c="#333">创业板指</Txt>
              <Num $s={21.5} $w={500} $c="#06a95c" $ml={8} $ls={1.2}>-1.84%</Num>
            </IndexLine>
          </IndexCol>
          <Trade>融买</Trade>
          <Trade>融卖</Trade>
          <Trade>撤单</Trade>
          <MoreCol>
            <MoreIcon viewBox="0 0 34 34" fill="none" stroke="#2e2e2e" strokeWidth="2.2">
              <circle cx="17" cy="17" r="15.3" />
              <g fill="#2e2e2e" stroke="none"><circle cx="10.5" cy="17" r="1.8" /><circle cx="17" cy="17" r="1.8" /><circle cx="23.5" cy="17" r="1.8" /></g>
            </MoreIcon>
            <Txt $s={21}>更多</Txt>
          </MoreCol>
        </BottomBar>
      </Page>
    </>
  );
}
